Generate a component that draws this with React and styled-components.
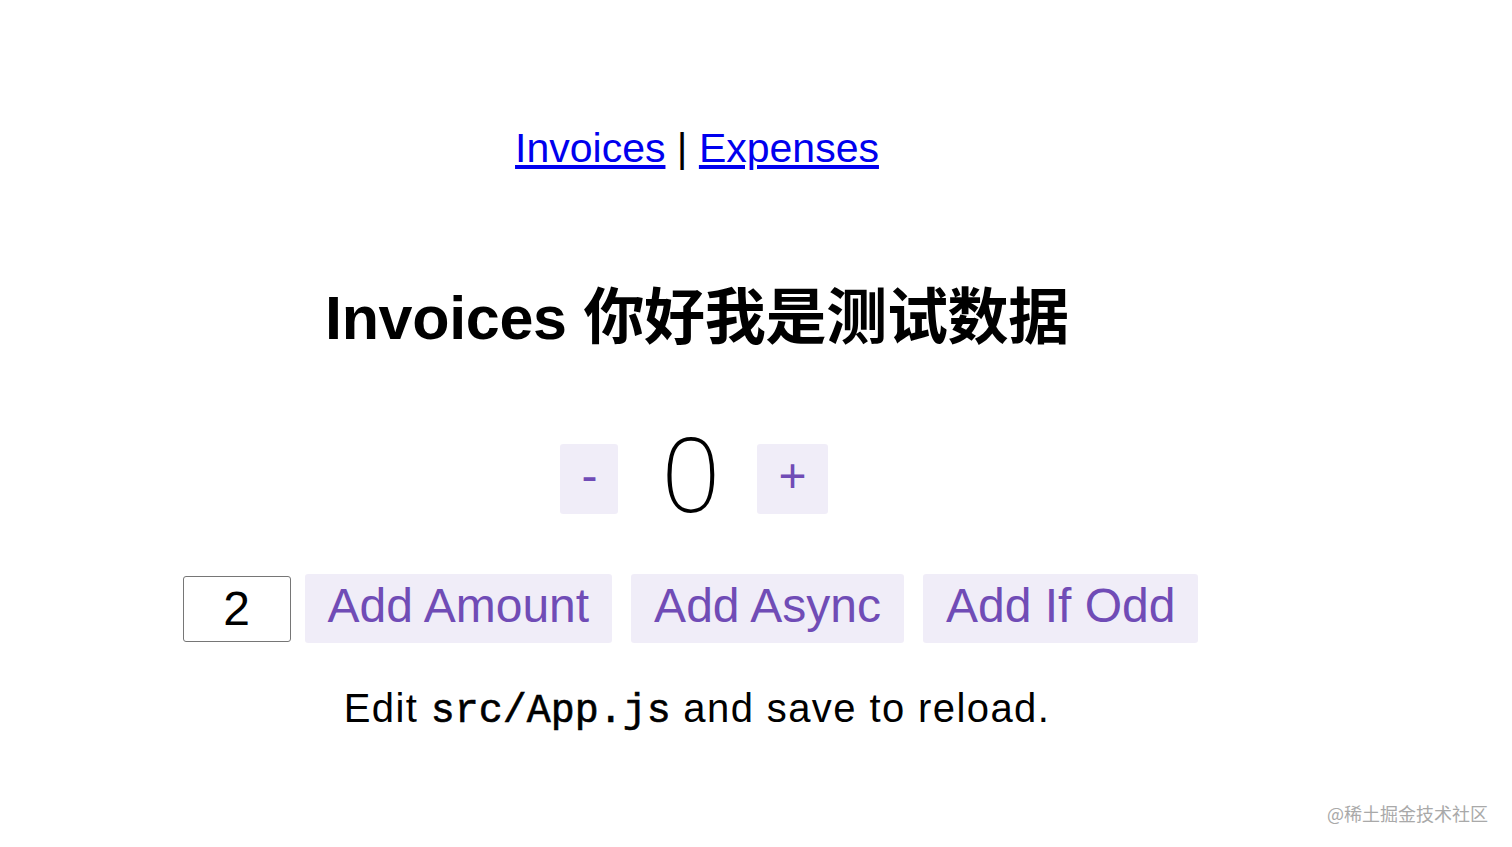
import React, { useState } from "react";
import styled, { createGlobalStyle } from "styled-components";

const GlobalStyle = createGlobalStyle`
  html, body {
    margin: 0;
    padding: 0;
    background: #ffffff;
  }
  body {
    font-family: "Liberation Sans", Arial, "Noto Sans CJK SC", sans-serif;
    color: #000000;
  }
`;

const Viewport = styled.div`
  position: relative;
  width: 100%;
  height: 847px;
  overflow: hidden;
`;

const Page = styled.div`
  width: 1394px;
  display: flex;
  flex-direction: column;
  align-items: center;
  padding-top: 124px;
  box-sizing: border-box;
`;

const Nav = styled.nav`
  font-size: 41px;
  line-height: 48px;
  white-space: pre;
`;

const NavLink = styled.a`
  color: #0000ee;
  text-decoration: underline;
  cursor: pointer;
`;

const Title = styled.h1`
  margin: 110px 0 0;
  font-family: "Liberation Sans", Arial, "Noto Sans CJK SC", sans-serif;
  font-size: 61px;
  font-weight: 700;
  letter-spacing: -0.3px;
  line-height: 72px;
`;

const CounterRow = styled.div`
  display: flex;
  align-items: flex-start;
  justify-content: center;
  height: 70px;
  margin-top: 90px;
`;

const ActionRow = styled.div`
  display: flex;
  align-items: center;
  justify-content: center;
  height: 69px;
  margin-top: 60px;
`;

const PurpleButton = styled.button`
  appearance: none;
  box-sizing: border-box;
  height: ${(p) => p.$h}px;
  margin: 0 ${(p) => p.$mr}px 0 6px;
  padding: 0 ${(p) => p.$pad}px 6px;
  border: 3px solid transparent;
  border-radius: 3px;
  background-color: rgba(112, 76, 182, 0.1);
  color: rgb(112, 76, 182);
  font-family: "Liberation Sans", Arial, sans-serif;
  font-size: 48px;
  line-height: 1.15;
  cursor: pointer;
  outline: none;
`;

const Value = styled.span`
  width: 121px;
  height: 56px;
  text-align: center;
  font-family: "Noto Sans", "Open Sans", sans-serif;
  font-weight: 200;
  font-size: 104px;
  line-height: 56px;
  color: #000;
`;

const AmountInput = styled.input`
  box-sizing: border-box;
  width: 108px;
  height: 66px;
  margin: 0 8px 0 0;
  padding: 3px;
  border: 1.5px solid #767676;
  border-radius: 3px;
  font-family: "Liberation Sans", Arial, sans-serif;
  font-size: 48px;
  text-align: center;
  color: #000;
  background: #fff;
  outline: none;
`;

const EditLine = styled.p`
  margin: 41px 0 0;
  font-size: 40px;
  line-height: 48px;
  letter-spacing: 1.4px;
  white-space: pre;
`;

const Code = styled.code`
  font-family: "Liberation Mono", "Courier New", monospace;
  font-size: 40px;
  font-weight: 400;
  letter-spacing: 0;
  -webkit-text-stroke: 0.6px #000;
`;

const Watermark = styled.div`
  position: absolute;
  right: 24px;
  bottom: 24px;
  font-family: "Noto Sans CJK SC", sans-serif;
  font-size: 18px;
  line-height: 20px;
  color: #a9a9a9;
`;

export default function App() {
  const [count, setCount] = useState(0);
  const [amount, setAmount] = useState("2");
  const inc = Number(amount) || 0;

  return (
    <Viewport>
      <GlobalStyle />
      <Page>
        <Nav>
          <NavLink>Invoices</NavLink>
          {" | "}
          <NavLink>Expenses</NavLink>
        </Nav>
        <Title>Invoices 你好我是测试数据</Title>
        <CounterRow>
          <PurpleButton $h={70} $mr={12} $pad={18} aria-label="Decrement value" onClick={() => setCount((c) => c - 1)}>
            -
          </PurpleButton>
          <Value>{count}</Value>
          <PurpleButton $h={70} $mr={12} $pad={18} aria-label="Increment value" onClick={() => setCount((c) => c + 1)}>
            +
          </PurpleButton>
        </CounterRow>
        <ActionRow>
          <AmountInput
            aria-label="Set increment amount"
            value={amount}
            onChange={(e) => setAmount(e.target.value)}
          />
          <PurpleButton $h={69} $mr={13} $pad={20} onClick={() => setCount((c) => c + inc)}>
            Add Amount
          </PurpleButton>
          <PurpleButton $h={69} $mr={13} $pad={20} onClick={() => setTimeout(() => setCount((c) => c + inc), 1000)}>
            Add Async
          </PurpleButton>
          <PurpleButton $h={69} $mr={13} $pad={20} onClick={() => setCount((c) => (c % 2 !== 0 ? c + inc : c))}>
            Add If Odd
          </PurpleButton>
        </ActionRow>
        <EditLine>
          {"Edit "}
          <Code>src/App.js</Code>
          {" and save to reload."}
        </EditLine>
      </Page>
      <Watermark>@稀土掘金技术社区</Watermark>
    </Viewport>
  );
}
